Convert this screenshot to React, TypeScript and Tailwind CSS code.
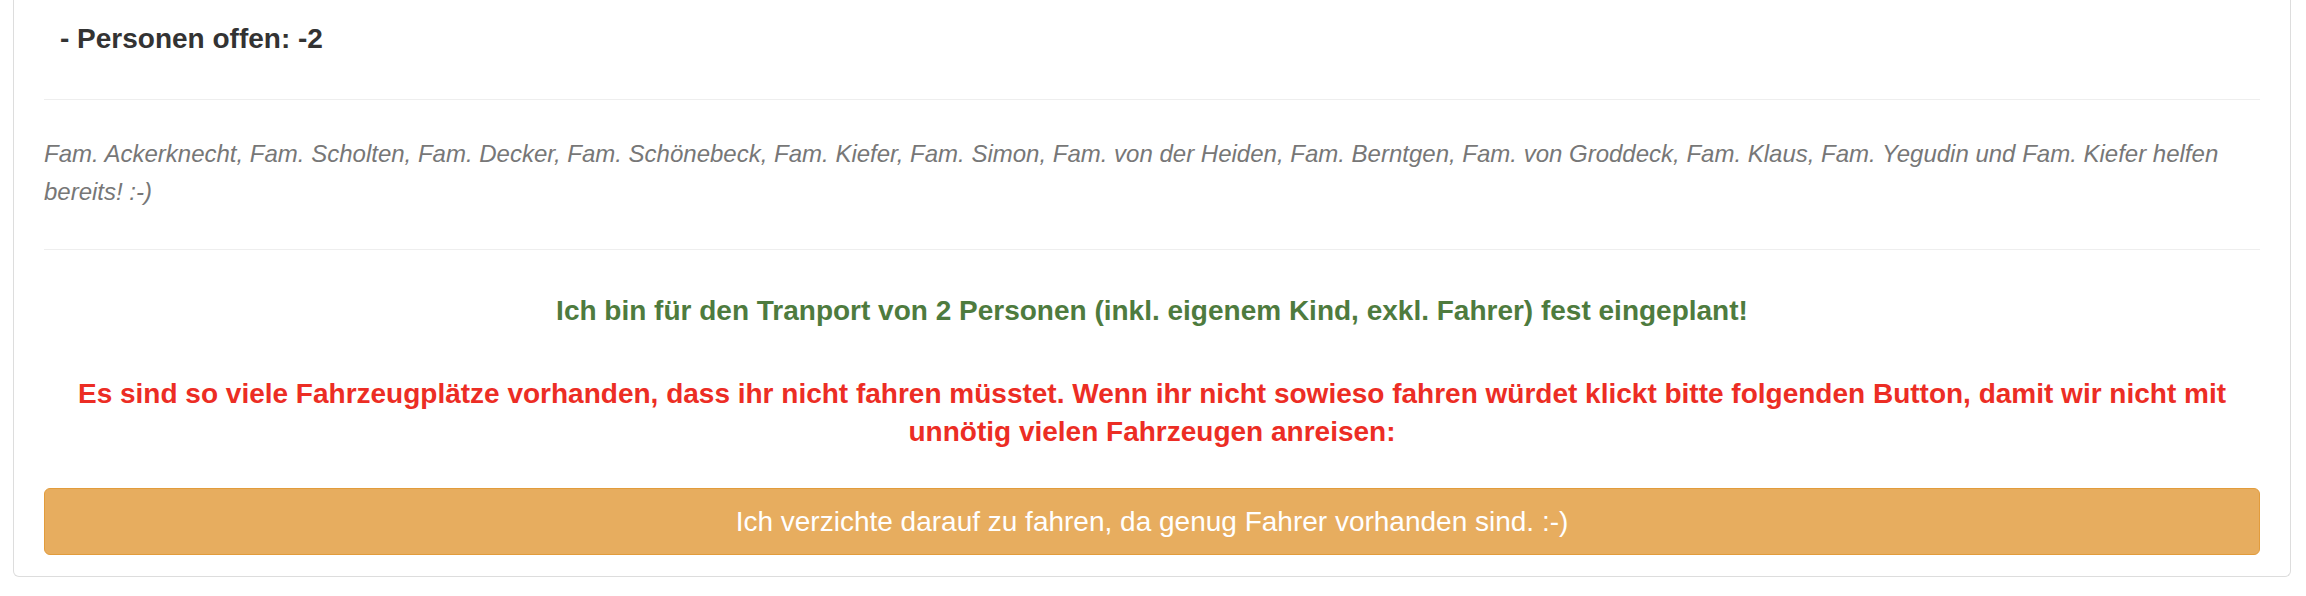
export default function App() {
  return (
    <div
      className="min-h-[596px] bg-white pl-[13px] pr-[15px]"
      style={{ fontFamily: '"Liberation Sans", Arial, sans-serif' }}
    >
      <div className="rounded-b-[6px] border-x border-b border-[#dddddd] px-[30px] pb-[21px]">
        <h4 className="pl-[16px] pt-[23px] text-[28px] font-bold leading-[31px] text-[#333333]">
          - Personen offen: -2
        </h4>

        <hr className="mt-[45px] border-0 border-t border-[#eeeeee]" />

        <p className="mt-[35px] text-[24px] italic leading-[38px] text-[#777777]">
          Fam. Ackerknecht, Fam. Scholten, Fam. Decker, Fam. Schönebeck, Fam. Kiefer, Fam. Simon, Fam. von der Heiden,
          Fam. Berntgen, Fam. von Groddeck, Fam. Klaus, Fam. Yegudin und Fam. Kiefer helfen bereits! :-)
        </p>

        <hr className="mt-[38px] border-0 border-t border-[#eeeeee]" />

        <p className="mt-[42px] text-center text-[28px] font-bold leading-[38px] text-[#4e7b3e]">
          Ich bin für den Tranport von 2 Personen (inkl. eigenem Kind, exkl. Fahrer) fest eingeplant!
        </p>

        <p className="mt-[45px] text-center text-[28px] font-bold leading-[38px] text-[#ec2d24]">
          Es sind so viele Fahrzeugplätze vorhanden, dass ihr nicht fahren müsstet. Wenn ihr nicht sowieso fahren
          würdet klickt bitte folgenden Button, damit wir nicht mit unnötig vielen Fahrzeugen anreisen:
        </p>

        <button
          type="button"
          className="mt-[37px] flex h-[67px] w-full items-center justify-center rounded-[6px] border-[1.5px] border-[#e29c3c] bg-[#e7ad5f] text-[28px] text-white"
        >
          Ich verzichte darauf zu fahren, da genug Fahrer vorhanden sind. :-)
        </button>
      </div>
    </div>
  );
}
